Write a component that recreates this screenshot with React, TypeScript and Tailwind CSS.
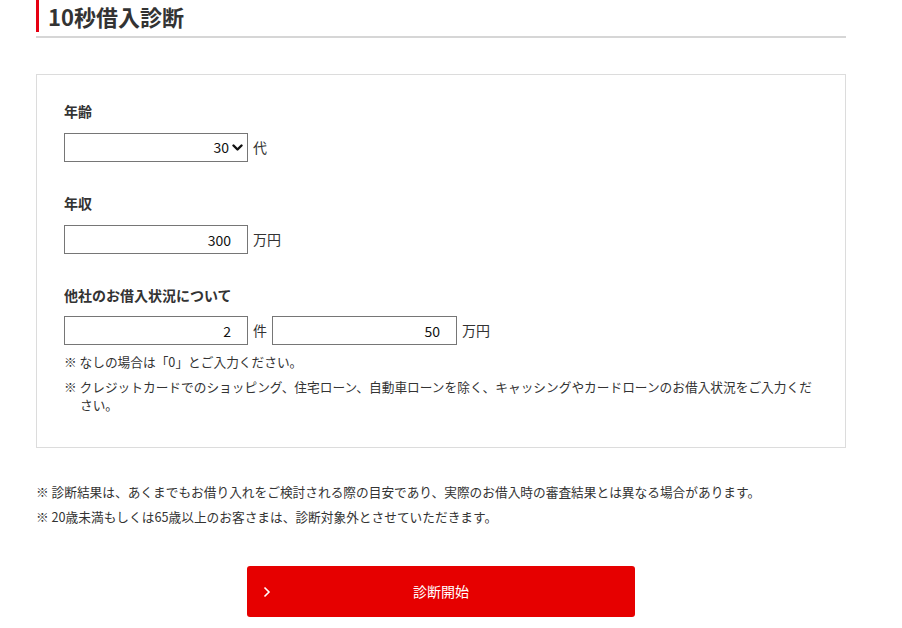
import React from "react";

const font = { fontFamily: '"Noto Sans CJK JP", "Noto Sans", sans-serif' };

function Chevron() {
  return (
    <svg width="11" height="8" viewBox="0 0 11 8" className="pointer-events-none absolute right-[5px] top-[11px]">
      <path d="M1.5 1.5 L5.5 5.5 L9.5 1.5" stroke="#111" strokeWidth="2.4" fill="none" strokeLinecap="round" strokeLinejoin="round" />
    </svg>
  );
}

function NumInput({ value, width }: { value: string; width: string }) {
  return (
    <input
      readOnly
      value={value}
      className={`${width} h-[29px] border border-[#767676] bg-white pr-[16px] text-right text-[14px] text-[#111] outline-none`}
      style={font}
    />
  );
}

export default function App() {
  return (
    <div className="min-h-[628px] bg-white text-[#333]" style={font}>
      <div className="ml-[36px] w-[810px]">
        <div className="border-b-2 border-[#d6d6d6] pb-[4px]">
          <h2 className="border-l-[3px] border-[#e60012] pl-[9px] text-[22px] font-bold leading-[32px] text-[#333]">
            10秒借入診断
          </h2>
        </div>

        <div className="mt-[36px] border border-[#dcdcdc] px-[27px] pt-[26px] pb-[33px]">
          <div className="text-[14px] font-bold leading-[21px]">年齢</div>
          <div className="mt-[11px] flex items-center gap-[5px]">
            <div className="relative w-[184px]">
              <select
                className="h-[29px] w-[184px] appearance-none border border-[#767676] bg-white pr-[18px] text-right text-[14px] text-[#111] outline-none"
                style={font}
                defaultValue="30"
              >
                <option value="20">20</option>
                <option value="30">30</option>
                <option value="40">40</option>
              </select>
              <Chevron />
            </div>
            <span className="text-[14px]">代</span>
          </div>

          <div className="mt-[31px] text-[14px] font-bold leading-[21px]">年収</div>
          <div className="mt-[11px] flex items-center gap-[5px]">
            <NumInput value="300" width="w-[184px]" />
            <span className="text-[14px]">万円</span>
          </div>

          <div className="mt-[31px] text-[14px] font-bold leading-[21px]">他社のお借入状況について</div>
          <div className="mt-[10px] flex items-center">
            <NumInput value="2" width="w-[184px]" />
            <span className="ml-[5px] mr-[5px] text-[14px]">件</span>
            <NumInput value="50" width="w-[185px]" />
            <span className="ml-[5px] text-[14px]">万円</span>
          </div>

          <p className="mt-[8px] pl-[16px] -indent-[16px] text-[12.7px] leading-[18px]">
            ※ なしの場合は「0」とご入力ください。
          </p>
          <p className="mt-[7px] pl-[16px] -indent-[16px] text-[12.7px] leading-[18px]">
            ※ クレジットカードでのショッピング、住宅ローン、自動車ローンを除く、キャッシングやカードローンのお借入状況をご入力ください。
          </p>
        </div>

        <p className="mt-[35px] text-[12.7px] leading-[18px]">
          ※ 診断結果は、あくまでもお借り入れをご検討される際の目安であり、実際のお借入時の審査結果とは異なる場合があります。
        </p>
        <p className="mt-[7px] text-[12.7px] leading-[18px]">
          ※ 20歳未満もしくは65歳以上のお客さまは、診断対象外とさせていただきます。
        </p>

        <div className="mt-[40px] flex justify-center">
          <button className="relative flex h-[51px] w-[388px] items-center justify-center rounded-[3px] bg-[#e60000] text-[14px] text-white">
            <svg width="8" height="12" viewBox="0 0 8 12" className="absolute left-[16px] top-[20px]">
              <path d="M1.5 1.5 L6 6 L1.5 10.5" stroke="#fff" strokeWidth="1.6" fill="none" />
            </svg>
            診断開始
          </button>
        </div>
      </div>
    </div>
  );
}
